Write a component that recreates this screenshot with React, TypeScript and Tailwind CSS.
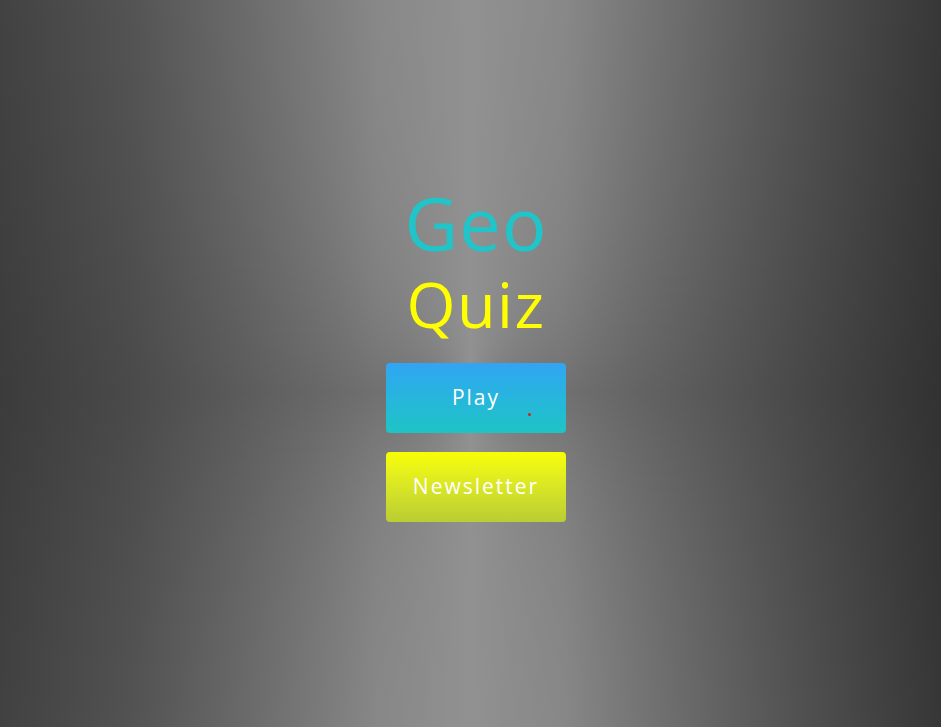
import React from "react";

export default function App() {
  return (
    <div className="relative flex min-h-screen w-full flex-col items-center bg-[image:conic-gradient(from_0deg_at_50%_54%,rgba(0,0,0,0)_0deg,rgba(0,0,0,0.2)_90deg,rgba(0,0,0,0)_180deg,rgba(0,0,0,0.2)_270deg,rgba(0,0,0,0)_360deg),linear-gradient(to_right,#4a4a4a_0%,#5c5c5c_14%,#7a7a7a_30%,#8c8c8c_40%,#919191_50%,#8c8c8c_60%,#787878_70%,#585858_86%,#3e3e3e_100%)] font-['Open_Sans',sans-serif]">
      <div className="flex h-[727px] w-full flex-col items-center pl-[11px] pt-[186px]">
        <h1 className="text-[74px] leading-[74px] font-normal tracking-[1px] text-[#1fc5c8]">Geo</h1>
        <h2 className="mt-[13px] text-[63px] leading-[62px] font-normal tracking-[1.5px] text-[#ffff00]">Quiz</h2>
        <button className="relative mt-[28px] flex h-[70px] w-[180px] items-center justify-center rounded-[4px] bg-gradient-to-b from-[#31a5f3] to-[#1fc4c4] text-[21px] font-medium tracking-[2px] text-white">
          Play
          <span className="absolute left-[142px] top-[50px] h-[3px] w-[3px] rounded-full bg-[#d62020]" />
        </button>
        <button className="mt-[19px] flex h-[70px] w-[180px] items-center justify-center rounded-[4px] bg-gradient-to-b from-[#f8ff00] to-[#bacd32] text-[21px] font-medium tracking-[2px] text-white">
          Newsletter
        </button>
      </div>
    </div>
  );
}
